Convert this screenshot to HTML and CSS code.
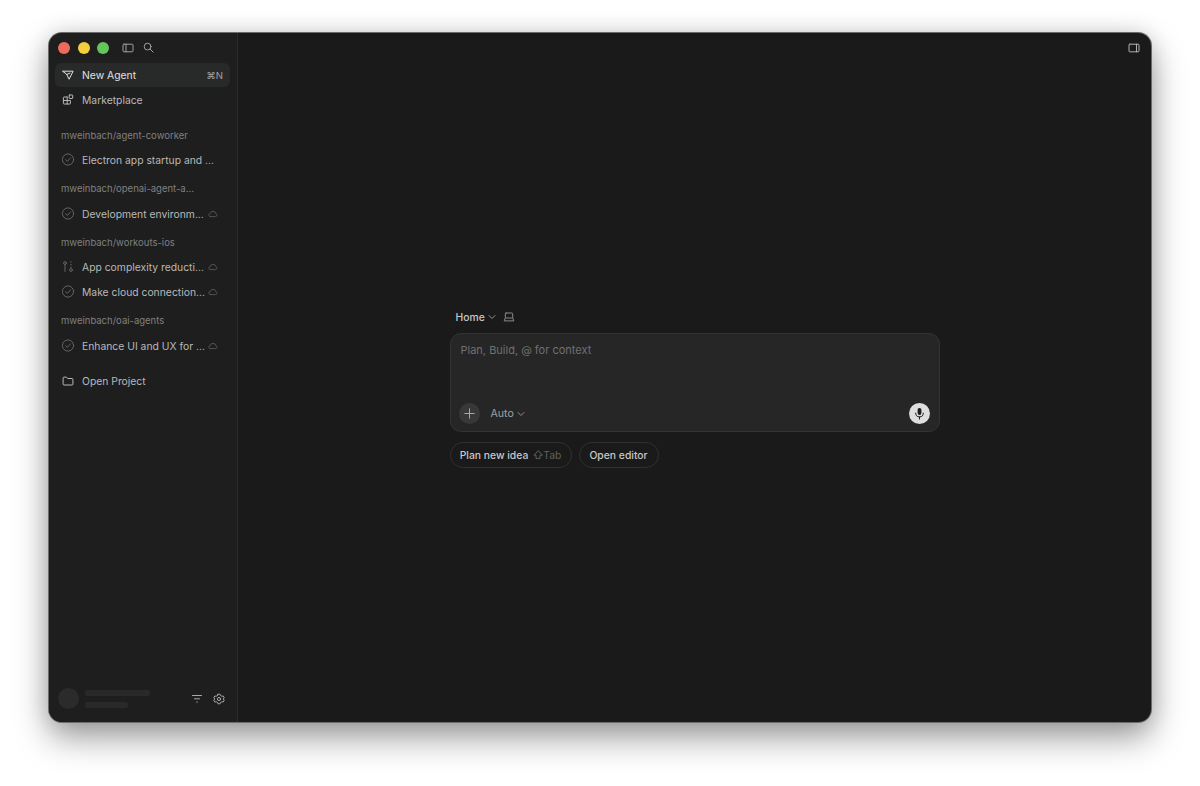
FILE: index.html
```html
<!DOCTYPE html>
<html lang="en">
<head>
    <meta charset="UTF-8">
    <meta name="viewport" content="width=device-width, initial-scale=1.0">
    <title>New Agent</title>
    <link rel="stylesheet" href="styles.css">
</head>
<body>
    <!-- Shared icons -->
    <svg class="sprite" aria-hidden="true">
        <symbol id="check" viewBox="0 0 14 14">
            <circle cx="7" cy="6.5" r="5.6"/>
            <path d="M4.6 6.700l1.700 1.700 3.200-3.500"/>
        </symbol>
        <symbol id="cloud" viewBox="0 0 10 10">
            <path d="M2.500 7.600h5a1.500 1.500 0 0 0 .4-2.900A2.900 2.900 0 0 0 2.200 4.600 1.500 1.500 0 0 0 2.500 7.600z"/>
        </symbol>
        <symbol id="chevron" viewBox="0 0 8 8">
            <path d="M1 2.5l3 3 3-3"/>
        </symbol>
    </svg>

    <div class="window">
        <aside class="sidebar">
            <div class="titlebar">
                <span class="light red"></span>
                <span class="light yellow"></span>
                <span class="light green"></span>
                <svg class="icon panel-icon" width="12" height="10" viewBox="0 0 12 10"><rect x="1" y="1.2" width="10" height="7.6" rx="1"/><path d="M4 1.2v7.6"/></svg>
                <svg class="icon" width="11" height="11" viewBox="0 0 11 11"><circle cx="4.6" cy="4.6" r="3.4"/><path d="M7.1 7.1l3 3"/></svg>
            </div>

            <nav class="nav">
                <a class="item active">
                    <svg class="icon" width="14" height="14" viewBox="0 0 14 14"><path d="M1.9 3.2h10.200L8.100 11.200 5.700 6.400zM5.700 6.400l3.300-1.300"/></svg>
                    <span class="name">New Agent</span>
                    <span class="shortcut">⌘N</span>
                </a>
                <a class="item">
                    <svg class="icon" width="14" height="14" viewBox="0 0 14 14"><path d="M6.200 4H3a.6.6 0 0 0-.6.6v5.800a.6.6 0 0 0 .6.6h5.800a.6.6 0 0 0 .6-.6V7.500h-7M6.200 4v7"/><rect x="8.200" y="2" width="3.500" height="3.500" rx=".4"/></svg>
                    <span class="name">Marketplace</span>
                </a>
            </nav>

            <section class="group first">
                <h2 class="label">mweinbach/agent-coworker</h2>
                <a class="item">
                    <svg class="icon status" width="14" height="14"><use href="#check"/></svg>
                    <span class="name">Electron app startup and ...</span>
                </a>
            </section>

            <section class="group">
                <h2 class="label">mweinbach/openai-agent-a...</h2>
                <a class="item">
                    <svg class="icon status" width="14" height="14"><use href="#check"/></svg>
                    <span class="name">Development environm...</span>
                    <svg class="icon cloud" width="10" height="10"><use href="#cloud"/></svg>
                </a>
            </section>

            <section class="group">
                <h2 class="label">mweinbach/workouts-ios</h2>
                <a class="item">
                    <svg class="icon status" width="14" height="14" viewBox="0 0 14 14"><circle cx="4" cy="3" r="1.4"/><path d="M4 4.400v7"/><circle cx="10" cy="10" r="1.4"/><path d="M10 1.6v7" stroke-dasharray=".6 2.200"/></svg>
                    <span class="name">App complexity reducti...</span>
                    <svg class="icon cloud" width="10" height="10"><use href="#cloud"/></svg>
                </a>
                <a class="item">
                    <svg class="icon status" width="14" height="14"><use href="#check"/></svg>
                    <span class="name">Make cloud connection...</span>
                    <svg class="icon cloud" width="10" height="10"><use href="#cloud"/></svg>
                </a>
            </section>

            <section class="group">
                <h2 class="label">mweinbach/oai-agents</h2>
                <a class="item">
                    <svg class="icon status" width="14" height="14"><use href="#check"/></svg>
                    <span class="name">Enhance UI and UX for ...</span>
                    <svg class="icon cloud" width="10" height="10"><use href="#cloud"/></svg>
                </a>
            </section>

            <a class="item open-project">
                <svg class="icon" width="14" height="14" viewBox="0 0 14 14"><path d="M2.1 3.9a.8.8 0 0 1 .8-.8h2.5l1.3 1.4h4.400a.8.8 0 0 1 .8.8v4.900a.8.8 0 0 1-.8.8H2.9a.8.8 0 0 1-.8-.8z"/></svg>
                <span class="name">Open Project</span>
            </a>

            <footer class="account">
                <span class="avatar"></span>
                <div class="skeleton">
                    <span class="bar"></span>
                    <span class="bar short"></span>
                </div>
                <svg class="icon" width="12" height="12" viewBox="0 0 12 12"><path d="M1.500 2.500h9M3.500 5.800h5M5.700 9.100h.6"/></svg>
                <svg class="icon" width="12" height="12" viewBox="0 0 12 12"><path d="M5 1.200h2l.5 1.300 1.300.7 1.400-.2 1 1.700-.9 1.300.9 1.300-1 1.700-1.400-.2-1.300.7-.5 1.300H5l-.5-1.300-1.300-.7-1.400.2-1-1.700L1.700 6l-.9-1.300 1-1.700 1.400.2 1.300-.7z"/><circle cx="6" cy="6" r="1.6"/></svg>
            </footer>
        </aside>

        <main class="main">
            <header class="toolbar">
                <svg class="icon" width="12" height="10" viewBox="0 0 12 10"><rect x="1" y="1.2" width="10" height="7.6" rx=".8"/><path d="M8.5 1.2v7.6"/></svg>
            </header>

            <div class="start">
                <div class="location">
                    <span>Home</span>
                    <svg class="icon chevron" width="8" height="8"><use href="#chevron"/></svg>
                    <svg class="icon laptop" width="12" height="10" viewBox="0 0 12 10"><rect x="2.3" y="1" width="7.4" height="5" rx=".8"/><path d="M2.300 6L1.200 8.900h9.600L9.700 6"/></svg>
                </div>

                <div class="composer">
                    <div class="placeholder">Plan, Build, @ for context</div>
                    <div class="controls">
                        <button class="round add"><svg class="icon" width="11" height="11" viewBox="0 0 11 11"><path d="M5.500 .8v9.400M.8 5.500h9.400"/></svg></button>
                        <span class="model">Auto</span>
                        <svg class="icon chevron" width="8" height="8"><use href="#chevron"/></svg>
                        <button class="round mic">
                            <svg width="13" height="13" viewBox="0 0 13 13"><rect class="capsule" x="4.6" y=".9" width="3.8" height="7" rx="1.9"/><path class="stand" d="M2.700 6.100a3.800 3.800 0 0 0 7.600 0M6.500 9.900v2.200"/></svg>
                        </button>
                    </div>
                </div>

                <div class="actions">
                    <button class="pill plan">Plan new idea
                        <span class="hint"><svg class="icon" width="10" height="10" viewBox="0 0 10 10"><path d="M5 1L1 5.200h2v3.200h4V5.200h2z"/></svg>Tab</span>
                    </button>
                    <button class="pill editor">Open editor</button>
                </div>
            </div>
        </main>
    </div>
</body>
</html>
```
FILE: styles.css
```css
* {
    box-sizing: border-box;
}
body {
    margin: 0;
    height: 786px;
    padding: 33px 49px 64px;
    overflow: hidden;
    background: #fff;
    font-family: Inter, "Liberation Sans", sans-serif;
    font-size: 10.35px;
    color: #c8c8c8;
}
.sprite {
    display: none;
}
.icon {
    flex: none;
    fill: none;
    stroke: currentColor;
    stroke-width: 1;
    stroke-linecap: round;
    stroke-linejoin: round;
}
.window {
    display: flex;
    height: 688.5px;
    border-radius: 13px;
    overflow: hidden;
    background: #1a1a1a;
    box-shadow: 0 0 0 1px #6b6b6b, 0 15px 34px rgba(0, 0, 0, 0.4), 0 0 22px rgba(0, 0, 0, 0.12);
}

/* Sidebar */
.sidebar {
    display: flex;
    flex-direction: column;
    width: 189px;
    padding: 0 7px 0 6px;
    border-right: 1px solid #2b2b2b;
    background: #1e1e1e;
}
.titlebar {
    display: flex;
    align-items: center;
    height: 29px;
    margin-bottom: 1px;
    padding-left: 3px;
    gap: 7.5px;
    color: #a0a0a0;
}
.light {
    width: 12px;
    height: 12px;
    border-radius: 50%;
}
.red {
    background: #ec6a5e;
}
.yellow {
    background: #f4ce3f;
}
.green {
    background: #64c65a;
}
.panel-icon {
    margin: 0 2px 0 5px;
}
.nav {
    display: flex;
    flex-direction: column;
    gap: 1px;
}
.item {
    display: flex;
    flex: none;
    align-items: center;
    height: 24px;
    padding: 0 7px 0 6px;
    border-radius: 6px;
    color: #b8b8b8;
    white-space: nowrap;
}
.active {
    background: #282929;
    color: #e0e0e0;
}
.name {
    flex: 1;
    margin-left: 7px;
}
.shortcut {
    font-size: 9.6px;
    color: #a0a0a0;
}
.group {
    display: flex;
    flex-direction: column;
    margin-top: 5px;
}
.first {
    margin-top: 11.5px;
}
.label {
    height: 24.5px;
    margin: 0;
    padding-left: 6px;
    font-size: 9.5px;
    font-weight: 400;
    line-height: 24.5px;
    color: #808080;
}
.group .item + .item {
    margin-top: 1px;
}
.status {
    color: #646464;
}
.cloud {
    margin-right: 5px;
    color: #585858;
    stroke-width: 0.9;
}
.open-project {
    margin-top: 11.5px;
}
.account {
    display: flex;
    align-items: center;
    height: 46px;
    margin-top: auto;
    padding: 0 5px 0 3px;
    gap: 10px;
    color: #a8a8a8;
}
.avatar {
    width: 21px;
    height: 21px;
    border-radius: 50%;
    background: #2b2b2b;
}
.skeleton {
    display: flex;
    flex: 1;
    flex-direction: column;
    gap: 6px;
    margin-left: -4px;
}
.bar {
    width: 65px;
    height: 6px;
    border-radius: 2px;
    background: #292929;
}
.short {
    width: 43px;
}

/* Main area */
.main {
    display: flex;
    flex: 1;
    flex-direction: column;
    align-items: center;
}
.toolbar {
    display: flex;
    align-items: center;
    justify-content: flex-end;
    width: 100%;
    height: 30px;
    padding-right: 11px;
    color: #b0b0b0;
}
.start {
    width: 490px;
    margin-top: 244px;
}
.location {
    display: flex;
    align-items: center;
    height: 20px;
    margin-bottom: 6px;
    padding-left: 6px;
    font-weight: 500;
}
.chevron {
    margin-left: 3px;
    color: #909090;
}
.laptop {
    margin-left: 7px;
    color: #8a8a8a;
}
.composer {
    display: flex;
    flex-direction: column;
    justify-content: space-between;
    height: 99px;
    padding: 9px 9px 7px 8px;
    border: 1px solid #333;
    border-radius: 11px;
    background: #262626;
}
.placeholder {
    padding-left: 2px;
    font-size: 11px;
    line-height: 14px;
    color: #707070;
}
.controls {
    display: flex;
    align-items: center;
    font-size: 10.6px;
    color: #a0a0a0;
}
.round {
    display: flex;
    align-items: center;
    justify-content: center;
    width: 21px;
    height: 21px;
    padding: 0;
    border: none;
    border-radius: 50%;
}
.add {
    background: #383838;
    color: #a8a8a8;
}
.model {
    margin-left: 11px;
}
.mic {
    margin-left: auto;
    background: #dedede;
}
.capsule {
    fill: #1c1c1c;
}
.stand {
    fill: none;
    stroke: #1c1c1c;
    stroke-width: 1;
    stroke-linecap: round;
}
.actions {
    display: flex;
    gap: 7px;
    margin-top: 10px;
}
.pill {
    display: flex;
    align-items: center;
    justify-content: center;
    height: 26px;
    padding: 0;
    border: 1px solid #303030;
    border-radius: 13px;
    background: transparent;
    font: inherit;
    font-weight: 500;
    color: #c8c8c8;
    white-space: nowrap;
}
.plan {
    width: 122px;
    gap: 5px;
}
.editor {
    width: 80px;
}
.hint {
    display: flex;
    align-items: center;
    font-weight: 400;
    color: #606060;
}
```
